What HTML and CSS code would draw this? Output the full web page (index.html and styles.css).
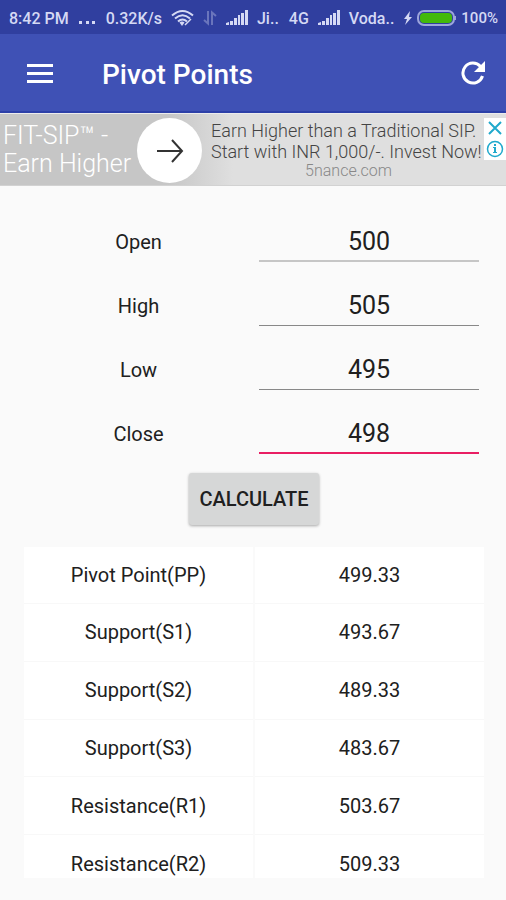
FILE: index.html
```html
<!DOCTYPE html>
<html lang="en">
<head>
<meta charset="utf-8">
<meta name="viewport" content="width=device-width, initial-scale=1">
<title>Pivot Points</title>
<link rel="stylesheet" href="styles.css">
</head>
<body>
<div class="status">
  <div class="group"><span>8:42 PM</span><svg width="18" height="20" viewBox="0 0 18 20"><path fill="currentColor" d="M1 13h3v3H1zM8 13h3v3H8zM14 13h3v3h-3z"/></svg></div>
  <div class="group">
    <span>0.32K/s</span>
    <svg width="23" height="18" viewBox="0 0 23 18" fill="none" stroke="currentColor" stroke-width="2"><path d="M1 6.500Q11.500-2.500 22 6.500M4 9.500q7.500-6.500 15 0M7 12.500q4.500-4 9 0"/><path fill="currentColor" stroke="none" d="M8.500 13.500q2.500-2 5 0L11 17z"/><path stroke-width="1.500" d="m14 16 6-6"/></svg>
    <svg class="faint" width="14" height="16" viewBox="0 0 14 16" fill="none" stroke="currentColor" stroke-width="2"><path d="M5 1v12.500L1 10M9 15V2.500L13 6"/></svg>
    <svg width="22" height="16" viewBox="0 0 22 16" fill="currentColor"><path d="M0 15v-2l3-1v3zM4 11h3v4H4zM8 8h3v7H8zM12 5h2v10h-2zM15 3h3v12h-3zM19 0h3v15h-3z"/></svg>
    <span>Ji..</span>
  </div>
  <div class="group">
    <span>4G</span>
    <svg width="22" height="16" viewBox="0 0 22 16" fill="currentColor"><path d="M0 15v-2l3-1v3zM4 11h3v4H4zM8 8h3v7H8zM12 5h2v10h-2zM15 3h3v12h-3zM19 0h3v15h-3z"/></svg>
    <span>Voda..</span>
  </div>
  <div class="group power">
    <svg width="8" height="14" viewBox="0 0 8 14" fill="currentColor"><path d="M6 0 0 8h3L1 14l7-8H5z"/></svg>
    <svg width="39" height="16" viewBox="0 0 39 16"><rect x="1" y="1" width="36" height="14" rx="6" fill="#303f9f" stroke="#9da5dc" stroke-width="2"/><rect x="3" y="3" width="32" height="10" rx="4" fill="#43b90b"/><path d="M38 6v4" stroke="#9da5dc" stroke-width="2"/></svg>
    <span>100%</span>
  </div>
</div>
<header class="toolbar">
  <button class="icon" aria-label="Menu"><svg width="28" height="22" viewBox="0 0 28 22"><path fill="currentColor" d="M1 2h26v3H1zM1 10h26v3H1zM1 18h26v3H1z"/></svg></button>
  <h1>Pivot Points</h1>
  <button class="icon" aria-label="Refresh"><svg width="24" height="24" viewBox="0 0 24 24"><path fill="none" stroke="currentColor" stroke-width="3" d="M19.500 5.500A10 10 0 1 0 21.500 15"/><path fill="currentColor" d="M24 0v11H13z"/></svg></button>
</header>
<aside class="ad">
  <a class="ad-title" href="#">FIT-SIP™ -<br>Earn Higher</a>
  <a class="ad-arrow" href="#" aria-label="Open offer"><svg width="28" height="24" viewBox="0 0 28 24" fill="none" stroke="#333" stroke-width="2"><path d="M1 12h25M16 1l10 11-10 11"/></svg></a>
  <a class="ad-copy" href="#">Earn Higher than a Traditional SIP.<br>Start with INR 1,000/-. Invest Now!<small>5nance.com</small></a>
  <div class="ad-controls">
    <button aria-label="Close ad"><svg width="14" height="14" viewBox="0 0 14 14"><path d="m1 1 12 12M13 1 1 13" stroke="#20a9cc" stroke-width="2"/></svg></button>
    <button aria-label="Ad information"><svg width="18" height="18" viewBox="0 0 18 18"><circle cx="9" cy="9" r="7.500" fill="none" stroke="#20a9cc" stroke-width="1.500"/><path fill="#20a9cc" d="M8 4h2v2H8zM7 7h3v5h1v1H7v-1h1V8H7z"/></svg></button>
  </div>
</aside>
<main>
  <form class="prices">
    <div class="field"><label for="open">Open</label><input id="open" class="quiet" inputmode="decimal" value="500"></div>
    <div class="field"><label for="high">High</label><input id="high" inputmode="decimal" value="505"></div>
    <div class="field"><label for="low">Low</label><input id="low" inputmode="decimal" value="495"></div>
    <div class="field"><label for="close">Close</label><input id="close" class="active" inputmode="decimal" value="498"></div>
    <button class="calculate" type="button">CALCULATE</button>
  </form>
  <div class="results">
    <table>
      <tbody>
        <tr><th scope="row">Pivot Point(PP)</th><td>499.33</td></tr>
        <tr><th scope="row">Support(S1)</th><td>493.67</td></tr>
        <tr><th scope="row">Support(S2)</th><td>489.33</td></tr>
        <tr><th scope="row">Support(S3)</th><td>483.67</td></tr>
        <tr><th scope="row">Resistance(R1)</th><td>503.67</td></tr>
        <tr><th scope="row">Resistance(R2)</th><td>509.33</td></tr>
      </tbody>
    </table>
  </div>
</main>
</body>
</html>
```
FILE: styles.css
```css
* { box-sizing: border-box; }
body {
  margin: 0;
  background: #fafafa;
  color: #202020;
  font-family: Roboto, "Liberation Sans", sans-serif;
}
svg { display: block; flex: none; }
button { font: inherit; padding: 0; border: 0; background: none; color: inherit; }
a { color: inherit; text-decoration: none; }

.status {
  display: flex;
  justify-content: space-between;
  align-items: center;
  height: 34px;
  padding: 2px 8px 0 9px;
  background: #303f9f;
  color: #d5d9f4;
  font-size: 16px;
  font-weight: 500;
  white-space: nowrap;
}
.group { display: flex; align-items: center; gap: 9px; }
.power { gap: 5px; font-size: 15px; }
.faint { opacity: .35; }

.toolbar {
  display: flex;
  align-items: center;
  height: 79px;
  padding: 0 21px 0 26px;
  background: #3f51b5;
  border-bottom: 2px solid #2d40a8;
  color: #fff;
}
.toolbar h1 {
  flex: 1;
  margin: 4px 0 0 48px;
  font-size: 28px;
  font-weight: 500;
  line-height: 32px;
}

.ad {
  display: flex;
  align-items: flex-start;
  position: relative;
  height: 73px;
  padding: 4px 20px 0 3px;
  background: linear-gradient(90deg, #c6c6c6 33%, #dfdfdf 46%);
  border-top: 1px solid #ececec;
  border-bottom: 1px solid #d2d2d2;
  white-space: nowrap;
}
.ad-title {
  flex: none;
  width: 134px;
  padding-top: 4px;
  color: #fff;
  font-size: 25px;
  font-weight: 300;
  line-height: 28px;
}
.ad-arrow {
  display: grid;
  place-items: center;
  flex: none;
  width: 65px;
  height: 65px;
  border-radius: 50%;
  background: #fff;
}
.ad-copy {
  flex: 1;
  padding: 2px 0 0 9px;
  color: #444;
  font-size: 18px;
  font-weight: 300;
  line-height: 21px;
}
.ad-copy small {
  display: block;
  color: #888;
  font-size: 16px;
  line-height: 18px;
  text-align: center;
}
.ad-controls {
  position: absolute;
  top: 4px;
  right: 0;
  display: grid;
  justify-items: center;
  align-items: center;
  width: 22px;
  height: 42px;
  background: #fff;
}

main { padding: 24px 22px 22px 24px; }
.prices { display: flex; flex-direction: column; }
.field {
  display: grid;
  grid-template-columns: 229fr 220fr;
  align-items: center;
  height: 64px;
  padding-right: 5px;
  column-gap: 6px;
}
label { text-align: center; font-size: 20px; }
input {
  width: 100%;
  min-width: 0;
  height: 40px;
  padding: 0;
  border: 0;
  border-bottom: 1px solid #888;
  border-radius: 0;
  outline: 0;
  background: none;
  color: inherit;
  font: inherit;
  font-size: 25px;
  text-align: center;
}
.quiet { border-bottom: 2px solid #c6c6c6; }
.active { border-bottom: 2px solid #e91e63; }
.calculate {
  align-self: center;
  width: 130px;
  height: 52px;
  margin: 7px 0 22px;
  border-radius: 3px;
  background: #d6d7d7;
  box-shadow: 0 1px 3px #0005;
  font-size: 20px;
  font-weight: 500;
}
.results { max-height: 331px; overflow: hidden; }
table {
  width: 100%;
  height: 346px;
  border-collapse: collapse;
  table-layout: fixed;
  background: #fff;
}
th, td {
  padding: 0;
  border-bottom: 1px solid #f8f8f8;
  font-size: 20px;
  font-weight: 400;
  text-align: center;
}
th { border-right: 2px solid #fafafa; }
```
